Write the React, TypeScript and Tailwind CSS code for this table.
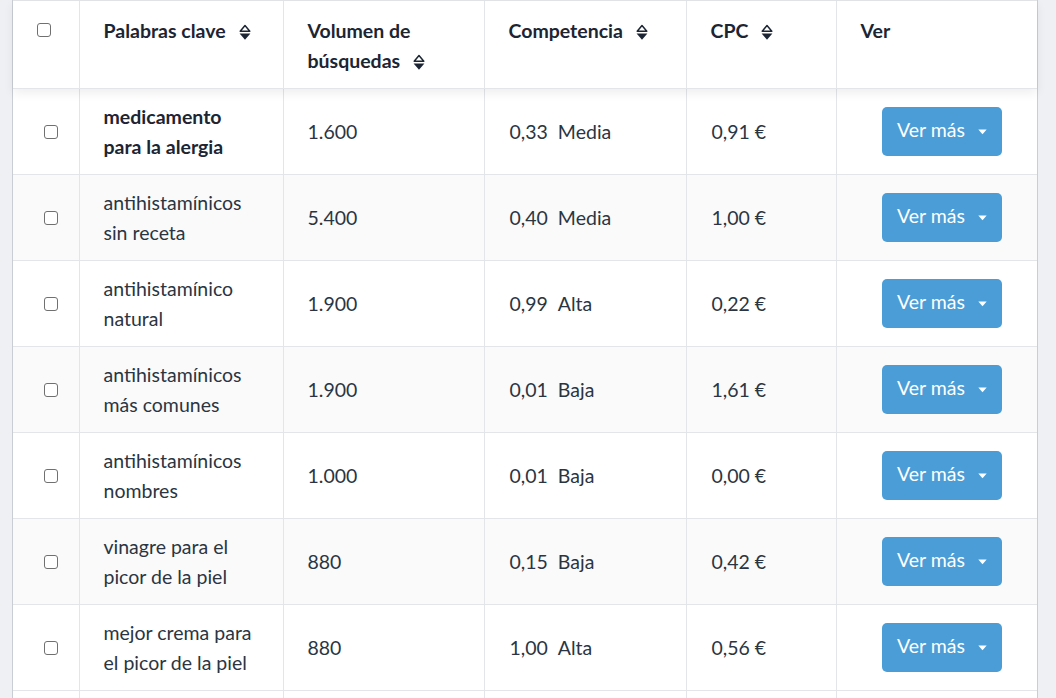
import React from 'react';

interface Row {
  keyword: string[];
  volume: string;
  comp: string;
  level: string;
  cpc: string;
  bold?: boolean;
}

const rows: Row[] = [
  { keyword: ['medicamento', 'para la alergia'], volume: '1.600', comp: '0,33', level: 'Media', cpc: '0,91 €', bold: true },
  { keyword: ['antihistamínicos', 'sin receta'], volume: '5.400', comp: '0,40', level: 'Media', cpc: '1,00 €' },
  { keyword: ['antihistamínico', 'natural'], volume: '1.900', comp: '0,99', level: 'Alta', cpc: '0,22 €' },
  { keyword: ['antihistamínicos', 'más comunes'], volume: '1.900', comp: '0,01', level: 'Baja', cpc: '1,61 €' },
  { keyword: ['antihistamínicos', 'nombres'], volume: '1.000', comp: '0,01', level: 'Baja', cpc: '0,00 €' },
  { keyword: ['vinagre para el', 'picor de la piel'], volume: '880', comp: '0,15', level: 'Baja', cpc: '0,42 €' },
  { keyword: ['mejor crema para', 'el picor de la piel'], volume: '880', comp: '1,00', level: 'Alta', cpc: '0,56 €' },
];

function SortIcon() {
  return (
    <svg width="14" height="17" viewBox="0 0 14 17" className="inline-block ml-[12px] align-[-3px]">
      <path d="M2.2 7.3 L7 1.6 L11.8 7.3 Z" fill="none" stroke="#1c2533" strokeWidth="1.5" strokeLinejoin="round" />
      <path d="M1.6 9.6 L12.4 9.6 L7 15.8 Z" fill="#1c2533" />
    </svg>
  );
}

function Checkbox() {
  return <span className="block w-[14px] h-[14px] rounded-[3px] border border-[#707070] bg-white" />;
}

export default function App() {
  return (
    <div className="w-[1056px] h-[698px] overflow-hidden bg-[#eef0f3] pl-[12px]" style={{ fontFamily: 'Lato, "Noto Sans", sans-serif' }}>
      <div className="w-[1026px] bg-white border-l border-r border-[#c9ced4] h-[698px]">
        <table className="border-collapse table-fixed w-[1024px] text-[19.5px] text-[#2b3542]">
          <colgroup>
            <col className="w-[66px]" />
            <col className="w-[204px]" />
            <col className="w-[201px]" />
            <col className="w-[202px]" />
            <col className="w-[150px]" />
            <col className="w-[201px]" />
          </colgroup>
          <thead>
            <tr className="h-[88px] shadow-[0_4px_10px_rgba(0,0,0,0.07)] relative">
              <th className="align-top pt-[22px] pl-[24px] text-left border-t border-[#e3e5e8]">
                <Checkbox />
              </th>
              {[['Palabras clave'], ['Volumen de', 'búsquedas'], ['Competencia'], ['CPC'], ['Ver']].map((h, i) => (
                <th key={i} className="align-top text-left pt-[15px] pl-[24px] font-bold text-[#1c2533] leading-[30px] border-l border-t border-[#e3e5e8]">
                  {h.length === 2 ? (
                    <>
                      {h[0]}
                      <br />
                      {h[1]}
                      <SortIcon />
                    </>
                  ) : (
                    <>
                      {h[0]}
                      {h[0] !== 'Ver' && <SortIcon />}
                    </>
                  )}
                </th>
              ))}
            </tr>
          </thead>
          <tbody>
            {rows.map((r, i) => (
              <tr key={i} className={`h-[86px] border-t border-[#e3e5e8] ${i % 2 === 1 ? 'bg-[#fafafa]' : 'bg-white'}`}>
                <td className="align-middle pl-[31px]">
                  <Checkbox />
                </td>
                <td className={`align-middle pl-[24px] leading-[30px] border-l border-[#e3e5e8] ${r.bold ? 'font-bold text-[#1c2533]' : ''}`}>
                  {r.keyword[0]}
                  <br />
                  {r.keyword[1]}
                </td>
                <td className="align-middle pl-[24px] border-l border-[#e3e5e8]">{r.volume}</td>
                <td className="align-middle pl-[25px] border-l border-[#e3e5e8]">
                  <span>{r.comp}</span>
                  <span className="ml-[10px]">{r.level}</span>
                </td>
                <td className="align-middle pl-[25px] border-l border-[#e3e5e8]">{r.cpc}</td>
                <td className="align-middle border-l border-[#e3e5e8]">
                  <div className="flex justify-end pr-[35px]">
                    <button className="w-[120px] h-[49px] rounded-[5px] bg-[#4a9dd6] text-white flex items-center pl-[15px] text-[19.5px]">
                      <span className="-mt-[4px]">Ver más</span>
                      <svg width="9" height="6" viewBox="0 0 9 6" className="ml-[13px]">
                        <path d="M0.3 0.5 L8.7 0.5 L4.5 5.2 Z" fill="white" />
                      </svg>
                    </button>
                  </div>
                </td>
              </tr>
            ))}
            <tr className="h-[86px] border-t border-[#e3e5e8] bg-white">
              <td></td>
              <td className="border-l border-[#e3e5e8]"></td>
              <td className="border-l border-[#e3e5e8]"></td>
              <td className="border-l border-[#e3e5e8]"></td>
              <td className="border-l border-[#e3e5e8]"></td>
              <td className="border-l border-[#e3e5e8]"></td>
            </tr>
          </tbody>
        </table>
      </div>
    </div>
  );
}
